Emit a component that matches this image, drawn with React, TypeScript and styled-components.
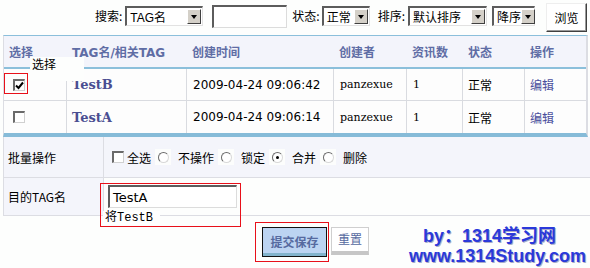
import React from "react";
import styled, { createGlobalStyle } from "styled-components";

const GlobalStyle = createGlobalStyle`
  html, body {
    margin: 0;
    padding: 0;
    background: #fdfefd;
  }
  body {
    width: 590px;
    height: 268px;
    overflow: hidden;
    font-family: "Noto Sans CJK SC", sans-serif;
    font-size: 12px;
    color: #000;
  }
  * { box-sizing: border-box; }
`;

const Page = styled.div`
  position: relative;
  width: 590px;
  height: 268px;
`;

/* ---------- toolbar ---------- */

const Toolbar = styled.div`
  height: 35px;
  display: flex;
  align-items: center;
  justify-content: flex-end;
  padding: 0 3px 3px 0;
`;

const Label = styled.span<{ $ml?: number }>`
  margin-left: ${p => p.$ml ?? 0}px;
  font-size: 12px;
  line-height: 14px;
  white-space: nowrap;
`;

const SelectBox = styled.div<{ $w: number; $ml: number }>`
  width: ${p => p.$w}px;
  height: 20px;
  margin-left: ${p => p.$ml}px;
  display: flex;
  align-items: center;
  justify-content: space-between;
  background: #fff;
  border-top: 2px solid #5c5c5c;
  border-left: 2px solid #5c5c5c;
  border-right: 1px solid #e2e2e2;
  border-bottom: 1px solid #e2e2e2;
  padding: 0 1px 0 3px;
  font-family: "Liberation Sans", "Noto Sans CJK SC", sans-serif;
  font-size: 12px;
  white-space: nowrap;
`;

const Arrow = styled.span`
  width: 14px;
  height: 15px;
  flex: none;
  background: #d4d0c8;
  border: 1px solid;
  border-color: #fff #404040 #404040 #fff;
  display: flex;
  align-items: center;
  justify-content: center;
  &::after {
    content: "";
    border-left: 3.5px solid transparent;
    border-right: 3.5px solid transparent;
    border-top: 4px solid #000;
  }
`;

const TextBox = styled.div<{ $w: number; $h: number; $ml?: number }>`
  width: ${p => p.$w}px;
  height: ${p => p.$h}px;
  margin-left: ${p => p.$ml ?? 0}px;
  background: #fff;
  border-top: 2px solid #5c5c5c;
  border-left: 2px solid #5c5c5c;
  border-right: 1px solid #dcdcdc;
  border-bottom: 1px solid #dcdcdc;
  display: flex;
  align-items: center;
  padding-left: 3px;
  font-family: "DejaVu Sans", sans-serif;
  font-size: 13px;
`;

const BrowseButton = styled.button`
  width: 41px;
  height: 29px;
  margin-left: 11px;
  margin-top: 2px;
  background: #fff;
  border: 1px solid;
  border-color: #eee #404040 #404040 #eee;
  box-shadow: inset -1px -1px #9a9a9a;
  font-family: "Noto Sans CJK SC", sans-serif;
  font-size: 12px;
  padding: 0;
  color: #000;
`;

/* ---------- list table ---------- */

const cols = "63px 120px 147px 73px 56px 62px 61px";

const Grid = styled.div`
  margin-left: 3px;
  width: 585px;
  border-left: 1px solid #dcdde3;
  border-right: 2px solid #dcdde3;
  border-top: 1px solid #8bbfdb;
  border-bottom: 4px solid #86bbd8;
`;

const HeadRow = styled.div`
  display: grid;
  grid-template-columns: ${cols};
  height: 33px;
  align-items: center;
  background: #f3f4fb;
  border-bottom: 2px solid #8bbfdb;
`;

const HeadCell = styled.div`
  padding-left: 5px;
  font-family: "DejaVu Sans", "Noto Sans CJK SC", sans-serif;
  font-weight: bold;
  font-size: 12px;
  color: #5f6da5;
  white-space: nowrap;
`;

const Row = styled.div<{ $last?: boolean }>`
  display: grid;
  grid-template-columns: ${cols};
  height: 32px;
  background: #fdfdfd;
  border-bottom: ${p => (p.$last ? "none" : "1px solid #d9dbe0")};
`;

const Cell = styled.div<{ $font?: "name" | "date" | "serif" | "cjk" | "link" }>`
  display: flex;
  align-items: center;
  padding-left: 5px;
  border-right: 1px solid #d9dbe0;
  white-space: nowrap;
  &:last-child { border-right: none; }
  ${p =>
    p.$font === "name" &&
    `font-family: "DejaVu Serif", serif; font-weight: bold; font-size: 13px; color: #4a4e92;`}
  ${p => p.$font === "date" && `font-family: "DejaVu Sans", sans-serif; font-size: 12px; padding-left: 6px;`}
  ${p => p.$font === "serif" && `font-family: "DejaVu Serif", serif; font-size: 11px; padding-left: 6px;`}
  ${p => p.$font === "cjk" && `font-size: 12px;`}
  ${p => p.$font === "link" && `font-size: 12px; color: #4b4f9c;`}
`;

const Check = styled.span<{ $ml?: number }>`
  width: 12px;
  height: 12px;
  margin-left: ${p => p.$ml ?? 0}px;
  flex: none;
  background: #fff;
  border-top: 2px solid #6a6a6a;
  border-left: 2px solid #6a6a6a;
  border-right: 1px solid #d0d0d0;
  border-bottom: 1px solid #d0d0d0;
  display: inline-flex;
  align-items: center;
  justify-content: center;
`;

const CheckBox = ({ checked, ml }: { checked?: boolean; ml?: number }) => (
  <Check $ml={ml}>
    {checked && (
      <svg width="9" height="9" viewBox="0 0 9 9">
        <path d="M1 4.5 L3.5 7 L8 1.5" stroke="#000" strokeWidth="2" fill="none" />
      </svg>
    )}
  </Check>
);

/* ---------- edit form ---------- */

const Form = styled.div`
  margin-left: 3px;
  width: 587px;
  border-left: 1px solid #dcdde3;
`;

const FormRow = styled.div<{ $h: number; $shaded?: boolean }>`
  display: grid;
  grid-template-columns: 100px 1fr;
  height: ${p => p.$h}px;
  border-bottom: 1px solid #dcdde3;
  background: ${p => (p.$shaded ? "#f4f5fb" : "transparent")};
`;

const FormLabel = styled.div`
  display: flex;
  align-items: center;
  padding-left: 4px;
  background: #f4f5fb;
  border-right: 1px solid #dcdde3;
  font-size: 12px;
`;

const FormValue = styled.div<{ $pl: number }>`
  position: relative;
  display: flex;
  align-items: center;
  padding-left: ${p => p.$pl}px;
  font-size: 12px;
`;

const OptionText = styled.span<{ $ml?: number }>`
  margin-left: ${p => p.$ml ?? 0}px;
`;

const RadioWrap = styled.span`
  width: 16px;
  height: 16px;
  margin: 0 7px 0 4px;
  background: #fcfdfc;
  display: inline-flex;
  align-items: center;
  justify-content: center;
`;

const RadioDot = styled.span<{ $on?: boolean }>`
  width: 11px;
  height: 11px;
  border-radius: 50%;
  border: 1.5px solid;
  border-color: #6a6a6a #d8d8d8 #d8d8d8 #6a6a6a;
  background: #fff;
  display: flex;
  align-items: center;
  justify-content: center;
  &::after {
    content: "";
    width: 3px;
    height: 3px;
    border-radius: 50%;
    background: ${p => (p.$on ? "#000" : "transparent")};
  }
`;

const Radio = ({ on }: { on?: boolean }) => (
  <RadioWrap>
    <RadioDot $on={on} />
  </RadioWrap>
);

const Hint = styled.span`
  position: absolute;
  left: -1px;
  top: 33px;
  width: 57px;
  height: 14px;
  background: #fff;
  padding-left: 2px;
  font-family: "Liberation Mono", "Noto Sans CJK SC", monospace;
  font-size: 12px;
  line-height: 14px;
`;

/* ---------- footer ---------- */

const Actions = styled.div`
  display: flex;
  align-items: flex-start;
  padding: 11px 0 0 262px;
  gap: 4px;
`;

const SubmitButton = styled.button`
  width: 65px;
  height: 30px;
  padding: 0 0 2px;
  border: 1px solid #111;
  background: #bcd4f2;
  box-shadow: inset 0 -3px #82b3cc;
  font-family: "Noto Sans CJK SC", sans-serif;
  font-weight: bold;
  font-size: 12px;
  color: #566aa0;
`;

const ResetButton = styled.button`
  width: 38px;
  height: 28px;
  padding: 0 0 2px;
  background: #fff;
  border: 1px solid #cfcfcf;
  border-bottom: 4px solid #c6c6c6;
  font-family: "Noto Sans CJK SC", sans-serif;
  font-size: 12px;
  color: #566aa0;
`;

/* ---------- overlays ---------- */

const Highlight = styled.div<{ $x: number; $y: number; $w: number; $h: number }>`
  position: absolute;
  left: ${p => p.$x}px;
  top: ${p => p.$y}px;
  width: ${p => p.$w}px;
  height: ${p => p.$h}px;
  border: 1px solid #e8101a;
  pointer-events: none;
`;

const Tooltip = styled.div`
  position: absolute;
  left: 30px;
  top: 57px;
  width: 54px;
  height: 24px;
  background: #fdfefd;
  padding-left: 2px;
  font-size: 12px;
  line-height: 13px;
`;

const Watermark = styled.div`
  position: absolute;
  right: 4px;
  top: 226px;
  display: flex;
  flex-direction: column;
  align-items: flex-end;
  font-family: "Liberation Sans", "Noto Sans CJK SC", sans-serif;
  font-weight: bold;
  font-size: 18px;
  line-height: 20px;
  color: #2a39da;
  text-shadow: 1px 1px 0 #a9acc8;
`;

const MarkLine = styled.span<{ $mr?: number }>`
  margin-right: ${p => p.$mr ?? 0}px;
  white-space: nowrap;
`;

const rows = [
  { name: "TestB", time: "2009-04-24 09:06:42", checked: true },
  { name: "TestA", time: "2009-04-24 09:06:14", checked: false },
];

export default function App() {
  return (
    <Page>
      <GlobalStyle />
      <Toolbar>
        <Label>搜索:</Label>
        <SelectBox $w={78} $ml={3}>
          TAG名 <Arrow />
        </SelectBox>
        <TextBox $w={75} $h={23} $ml={9} />
        <Label $ml={5}>状态:</Label>
        <SelectBox $w={48} $ml={2}>
          正常 <Arrow />
        </SelectBox>
        <Label $ml={8}>排序:</Label>
        <SelectBox $w={79} $ml={3}>
          默认排序 <Arrow />
        </SelectBox>
        <SelectBox $w={43} $ml={5}>
          降序 <Arrow />
        </SelectBox>
        <BrowseButton>浏览</BrowseButton>
      </Toolbar>

      <Grid>
        <HeadRow>
          <HeadCell>选择</HeadCell>
          <HeadCell>TAG名/相关TAG</HeadCell>
          <HeadCell>创建时间</HeadCell>
          <HeadCell>创建者</HeadCell>
          <HeadCell>资讯数</HeadCell>
          <HeadCell>状态</HeadCell>
          <HeadCell>操作</HeadCell>
        </HeadRow>
        {rows.map((r, i) => (
          <Row key={r.name} $last={i === rows.length - 1}>
            <Cell>
              <CheckBox checked={r.checked} ml={4} />
            </Cell>
            <Cell $font="name">{r.name}</Cell>
            <Cell $font="date">{r.time}</Cell>
            <Cell $font="serif">panzexue</Cell>
            <Cell $font="serif">1</Cell>
            <Cell $font="cjk">正常</Cell>
            <Cell $font="link">编辑</Cell>
          </Row>
        ))}
      </Grid>

      <Form>
        <FormRow $h={41} $shaded>
          <FormLabel>批量操作</FormLabel>
          <FormValue $pl={8}>
            <CheckBox />
            <OptionText $ml={3}>全选</OptionText>
            <Radio />
            <OptionText>不操作</OptionText>
            <Radio />
            <OptionText>锁定</OptionText>
            <Radio on />
            <OptionText>合并</OptionText>
            <Radio />
            <OptionText>删除</OptionText>
          </FormValue>
        </FormRow>
        <FormRow $h={38}>
          <FormLabel>目的TAG名</FormLabel>
          <FormValue $pl={4}>
            <TextBox $w={129} $h={23}>TestA</TextBox>
            <Hint>将TestB</Hint>
          </FormValue>
        </FormRow>
      </Form>

      <Actions>
        <SubmitButton>提交保存</SubmitButton>
        <ResetButton>重置</ResetButton>
      </Actions>

      <Tooltip>选择</Tooltip>
      <Watermark>
        <MarkLine $mr={30}>by：1314学习网</MarkLine>
        <MarkLine>www.1314Study.com</MarkLine>
      </Watermark>

      <Highlight $x={4} $y={73} $w={24} $h={21} />
      <Highlight $x={100} $y={183} $w={141} $h={44} />
      <Highlight $x={255} $y={222} $w={74} $h={40} />
    </Page>
  );
}
